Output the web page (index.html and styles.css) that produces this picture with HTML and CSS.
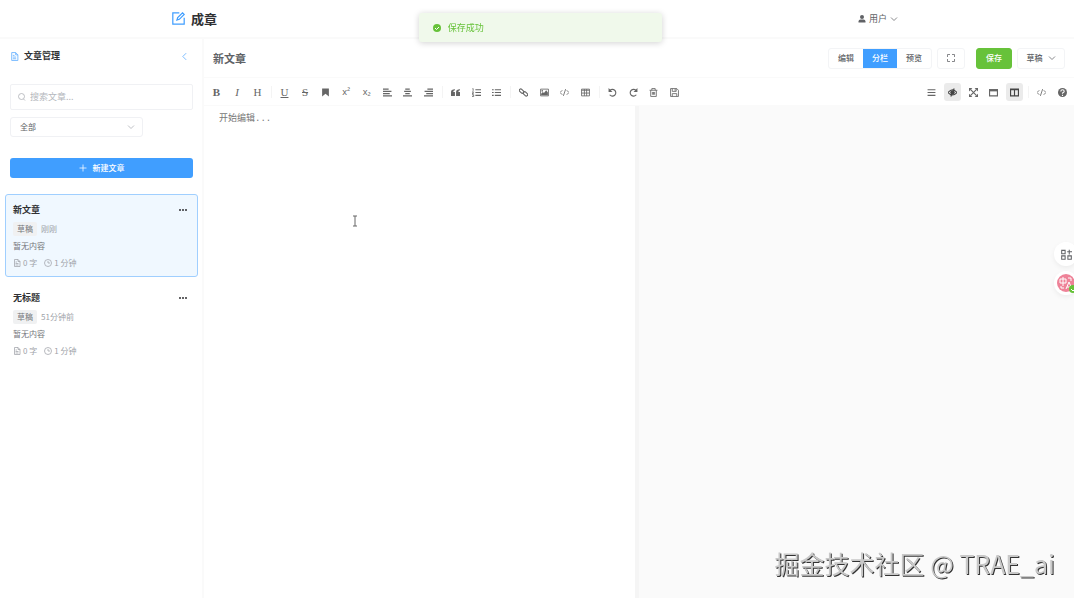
FILE: index.html
```html
<!DOCTYPE html>
<html lang="zh-CN">
<head>
  <meta charset="UTF-8" />
  <meta name="viewport" content="width=device-width, initial-scale=1.0"/>
  <title>成章</title>
  <link rel="stylesheet" href="styles.css">
</head>
<body>
  <!-- icon sprite -->
  <svg class="sprite" aria-hidden="true">
    <symbol id="i-edit" viewBox="0 0 16 16"><path d="M9 1H1v14h14V7M6 10l1-3 6-6 2 2-6 6z"/></symbol>
    <symbol id="i-doc" viewBox="0 0 16 16"><path d="M3 1h7l4 4v10H3zM10 1v4h4M5 6h3M5 9h6M5 12h6"/></symbol>
    <symbol id="i-left" viewBox="0 0 16 16"><path d="M11 2L5 8l6 6"/></symbol>
    <symbol id="i-down" viewBox="0 0 16 16"><path d="M2 5l6 6 6-6"/></symbol>
    <symbol id="i-search" viewBox="0 0 16 16"><circle cx="7" cy="7" r="6"/><path d="M11 12l3 3"/></symbol>
    <symbol id="i-plus" viewBox="0 0 16 16"><path d="M8 1v14M1 8h14"/></symbol>
    <symbol id="i-clock" viewBox="0 0 16 16"><circle cx="8" cy="8" r="7"/><path d="M8 4v4h4"/></symbol>
    <symbol id="i-more" viewBox="0 0 16 16"><g class="solid"><circle cx="2" cy="8" r="2"/><circle cx="8" cy="8" r="2"/><circle cx="14" cy="8" r="2"/></g></symbol>
    <symbol id="i-user" viewBox="0 0 16 16"><g class="solid"><circle cx="8" cy="4" r="4"/><path d="M1 15v-2q0-4 4-4h6q4 0 4 4v2z"/></g></symbol>
    <symbol id="i-check" viewBox="0 0 16 16"><circle class="solid" cx="8" cy="8" r="8"/><path class="tick" d="M4 8l3 3 5-5"/></symbol>
    <symbol id="i-full" viewBox="0 0 16 16"><path d="M1 6V1h5M10 1h5v5M15 10v5h-5M6 15H1v-5"/></symbol>
    <symbol id="i-bookmark" viewBox="0 0 16 16"><path class="solid" d="M2 1h12v14l-6-5-6 5z"/></symbol>
    <symbol id="i-al" viewBox="0 0 16 16"><path class="thick" d="M0 2h10M0 6h15M0 10h12M0 14h16"/></symbol>
    <symbol id="i-ac" viewBox="0 0 16 16"><path class="thick" d="M4 2h8M2 6h12M4 10h8M0 14h16"/></symbol>
    <symbol id="i-ar" viewBox="0 0 16 16"><path class="thick" d="M6 2h10M1 6h15M4 10h12M0 14h16"/></symbol>
    <symbol id="i-quote" viewBox="0 0 16 16"><path class="solid" d="M7 2v2Q4 4 4 7h3v7H0V7q0-5 7-5zM16 2v2q-3 0-3 3h3v7H9V7q0-5 7-5z"/></symbol>
    <symbol id="i-ol" viewBox="0 0 16 16"><path class="thick" d="M6 3h10M6 8h10M6 13h10"/><path d="M1 1h1v4M0 7h3L0 10h3M0 12h3v3H0"/></symbol>
    <symbol id="i-ul" viewBox="0 0 16 16"><path class="thick" d="M5 3h11M5 8h11M5 13h11M0 3h3M0 8h3M0 13h3"/></symbol>
    <symbol id="i-link" viewBox="0 0 16 16"><g class="thick"><rect x="0" y="3" width="9" height="5" rx="2.5" transform="rotate(45 4.5 5.5)"/><rect x="7" y="8" width="9" height="5" rx="2.5" transform="rotate(45 11.5 10.5)"/></g></symbol>
    <symbol id="i-image" viewBox="0 0 16 16"><path d="M1 2h14v12H1z"/><path class="solid" d="M2 13v-3l3-3 2 2 4-5 3 4v5z"/><circle class="solid" cx="4" cy="5" r="1.5"/></symbol>
    <symbol id="i-code" viewBox="0 0 16 16"><path d="M4 4L0 8l4 4M12 4l4 4-4 4M10 2L6 14"/></symbol>
    <symbol id="i-table" viewBox="0 0 16 16"><path d="M1 2h14v12H1zM1 4h14M1 9h14M6 2v12M10 2v12"/></symbol>
    <symbol id="i-undo" viewBox="0 0 16 16"><path class="thick" d="M3 5a6 6 0 1 1 0 7"/><path class="solid" d="M1 0v7h7z"/></symbol>
    <symbol id="i-redo" viewBox="0 0 16 16"><path class="thick" d="M13 5a6 6 0 1 0 0 7"/><path class="solid" d="M15 0v7H8z"/></symbol>
    <symbol id="i-trash" viewBox="0 0 16 16"><path d="M1 4h14M5 4V1h6v3M3 4v11h10V4M6 7v5M8 7v5M10 7v5"/></symbol>
    <symbol id="i-save" viewBox="0 0 16 16"><path d="M1 1h11l3 3v11H1zM4 1v5h7V1M4 15v-5h8v5M9 2v3"/></symbol>
    <symbol id="i-menu" viewBox="0 0 16 16"><path class="thick" d="M1 3h14M1 8h14M1 13h14"/></symbol>
    <symbol id="i-eye" viewBox="0 0 16 16"><path class="thick" d="M0 8q8-10 16 0-8 9-16 0z"/><circle class="solid" cx="8" cy="8" r="4"/><path class="thick" d="M11 1L5 15"/></symbol>
    <symbol id="i-expand" viewBox="0 0 16 16"><path class="thick" d="M3 3l10 10M13 3L3 13"/><path class="solid" d="M0 0h6L0 6zM16 0v6l-6-6zM0 16v-6l6 6zM16 16h-6l6-6z"/></symbol>
    <symbol id="i-window" viewBox="0 0 16 16"><path class="thick" d="M1 3h14v11H1z"/><path class="solid" d="M0 2h16v4H0z"/></symbol>
    <symbol id="i-split" viewBox="0 0 16 16"><path class="thick" d="M1 2h14v12H1zM8 3v11M1 3h14"/></symbol>
    <symbol id="i-help" viewBox="0 0 16 16"><circle class="solid" cx="8" cy="8" r="8"/><path class="tick" d="M5 6q0-3 3-3t3 3q0 1-3 3v1M8 12v2"/></symbol>
    <symbol id="i-apps" viewBox="0 0 16 16"><path d="M1 2h5v5H1zM1 10h5v5H1zM10 10h5v5h-5zM12 1v7M9 4h7"/></symbol>
  </svg>

  <header class="navbar">
    <div class="navbar-inner">
      <h1 class="brand"><svg class="icon icon-lg"><use href="#i-edit"/></svg>成章</h1>
      <button class="user-btn"><svg class="icon"><use href="#i-user"/></svg>用户<svg class="icon"><use href="#i-down"/></svg></button>
    </div>
  </header>

  <div class="layout">
    <aside class="sidebar">
      <div class="sidebar-header">
        <h2><svg class="icon"><use href="#i-doc"/></svg>文章管理</h2>
        <button class="collapse-btn" aria-label="收起"><svg class="icon"><use href="#i-left"/></svg></button>
      </div>

      <div class="filters">
        <label class="search"><svg class="icon"><use href="#i-search"/></svg><input type="text" placeholder="搜索文章..." aria-label="搜索文章"></label>
        <div class="status">
          <select aria-label="状态"><option>全部</option><option>草稿</option></select>
          <svg class="icon"><use href="#i-down"/></svg>
        </div>
        <button class="new-btn"><svg class="icon"><use href="#i-plus"/></svg>新建文章</button>
      </div>

      <section class="article-list">
        <article class="article active">
          <div class="article-top">
            <h3>新文章</h3>
            <button class="more-btn" aria-label="更多"><svg class="icon"><use href="#i-more"/></svg></button>
          </div>
          <div class="meta"><span class="tag">草稿</span><span>刚刚</span></div>
          <p>暂无内容</p>
          <div class="counts"><span><svg class="icon"><use href="#i-doc"/></svg>0 字</span><span><svg class="icon"><use href="#i-clock"/></svg>1 分钟</span></div>
        </article>
        <article class="article">
          <div class="article-top">
            <h3>无标题</h3>
            <button class="more-btn" aria-label="更多"><svg class="icon"><use href="#i-more"/></svg></button>
          </div>
          <div class="meta"><span class="tag">草稿</span><span>51分钟前</span></div>
          <p>暂无内容</p>
          <div class="counts"><span><svg class="icon"><use href="#i-doc"/></svg>0 字</span><span><svg class="icon"><use href="#i-clock"/></svg>1 分钟</span></div>
        </article>
      </section>
    </aside>

    <main class="editor">
      <div class="title-bar">
        <h2>新文章</h2>
        <div class="actions">
          <div class="mode-group">
            <button>编辑</button>
            <button class="selected">分栏</button>
            <button>预览</button>
          </div>
          <button class="btn full-btn" aria-label="全屏"><svg class="icon"><use href="#i-full"/></svg></button>
          <button class="btn save-btn">保存</button>
          <button class="btn draft-btn">草稿<svg class="icon"><use href="#i-down"/></svg></button>
        </div>
      </div>

      <div class="toolbar">
        <div class="tools tools-3">
          <button><b>B</b></button>
          <button><i>I</i></button>
          <button>H</button>
        </div>
        <span class="divider"></span>
        <div class="tools tools-8">
          <button><u>U</u></button>
          <button><s>S</s></button>
          <button aria-label="标记"><svg class="icon"><use href="#i-bookmark"/></svg></button>
          <button class="script">x²</button>
          <button class="script">x₂</button>
          <button aria-label="左对齐"><svg class="icon"><use href="#i-al"/></svg></button>
          <button aria-label="居中"><svg class="icon"><use href="#i-ac"/></svg></button>
          <button aria-label="右对齐"><svg class="icon"><use href="#i-ar"/></svg></button>
        </div>
        <span class="divider"></span>
        <div class="tools tools-3">
          <button aria-label="引用"><svg class="icon"><use href="#i-quote"/></svg></button>
          <button aria-label="有序列表"><svg class="icon"><use href="#i-ol"/></svg></button>
          <button aria-label="无序列表"><svg class="icon"><use href="#i-ul"/></svg></button>
        </div>
        <span class="divider"></span>
        <div class="tools tools-4">
          <button aria-label="链接"><svg class="icon"><use href="#i-link"/></svg></button>
          <button aria-label="图片"><svg class="icon"><use href="#i-image"/></svg></button>
          <button aria-label="代码"><svg class="icon"><use href="#i-code"/></svg></button>
          <button aria-label="表格"><svg class="icon"><use href="#i-table"/></svg></button>
        </div>
        <span class="divider"></span>
        <div class="tools tools-4">
          <button aria-label="撤销"><svg class="icon"><use href="#i-undo"/></svg></button>
          <button aria-label="重做"><svg class="icon"><use href="#i-redo"/></svg></button>
          <button aria-label="清空"><svg class="icon"><use href="#i-trash"/></svg></button>
          <button aria-label="存储"><svg class="icon"><use href="#i-save"/></svg></button>
        </div>
        <div class="tools tools-5 push">
          <button aria-label="目录"><svg class="icon"><use href="#i-menu"/></svg></button>
          <button class="on" aria-label="预览"><svg class="icon"><use href="#i-eye"/></svg></button>
          <button aria-label="全屏编辑"><svg class="icon"><use href="#i-expand"/></svg></button>
          <button aria-label="阅读"><svg class="icon"><use href="#i-window"/></svg></button>
          <button class="on" aria-label="双栏"><svg class="icon"><use href="#i-split"/></svg></button>
        </div>
        <span class="divider"></span>
        <div class="tools tools-2">
          <button aria-label="源码"><svg class="icon"><use href="#i-code"/></svg></button>
          <button aria-label="帮助"><svg class="icon"><use href="#i-help"/></svg></button>
        </div>
      </div>

      <div class="panes">
        <textarea placeholder="开始编辑..." aria-label="内容"></textarea>
        <div class="preview"></div>
      </div>
    </main>
  </div>

  <div class="toast" role="status"><svg class="icon"><use href="#i-check"/></svg>保存成功</div>

  <svg class="cursor" viewBox="0 0 6 12" aria-hidden="true"><path d="M1 1h4M3 1v10M1 11h4"/></svg>

  <button class="float-btn float-apps" aria-label="应用"><svg class="icon"><use href="#i-apps"/></svg></button>
  <button class="float-btn float-translate" aria-label="翻译">
    <svg viewBox="0 0 20 20"><circle cx="10" cy="10" r="9" fill="#ee8298"/><path d="M4 6h6v4H4zM7 4v9M12 5h3v3M5 13v2h3M10 16l3-7 3 7M11 14h4" fill="none" stroke="#fff"/><circle cx="17" cy="16" r="4" fill="#67c23a"/><path d="M15 16l2 2 3-3" fill="none" stroke="#fff"/></svg>
  </button>

  <div class="watermark">掘金技术社区 @ TRAE_ai</div>
</body>
</html>
```
FILE: styles.css
```css
* {
  box-sizing: border-box;
}

body {
  margin: 0;
  height: 100vh;
  display: flex;
  flex-direction: column;
  overflow: hidden;
  background-color: #fff;
  color: #606266;
  font-family: "Noto Sans CJK SC", sans-serif;
  font-size: 8px;
  line-height: 12px;
}

h1, h2, h3, p {
  margin: 0;
}

button, input, select, textarea {
  font: inherit;
  color: inherit;
  margin: 0;
  padding: 0;
  border: 0;
  background: none;
  outline: none;
}

button {
  display: flex;
  align-items: center;
  justify-content: center;
  cursor: pointer;
}

.sprite {
  position: absolute;
  width: 0;
  height: 0;
}

.icon {
  width: 8px;
  height: 8px;
  flex: none;
  fill: none;
  stroke: currentColor;
  stroke-width: 1.5;
}

.icon-lg {
  width: 13px;
  height: 13px;
}

.solid {
  fill: currentColor;
  stroke: none;
}

.thick {
  stroke-width: 2;
}

.tick {
  stroke: #fff;
  stroke-width: 2;
}

/* header */
.navbar {
  height: 39px;
  flex: none;
  border-bottom: 2px solid #fafafa;
  display: flex;
}

.navbar-inner {
  width: 100%;
  max-width: 730px;
  margin: 0 auto;
  display: flex;
  justify-content: space-between;
  align-items: center;
}

.brand {
  display: flex;
  align-items: center;
  gap: 6px;
  color: #303133;
  font-size: 13px;
  line-height: 20px;
}

.brand .icon {
  color: #409eff;
}

.user-btn {
  gap: 3px;
  padding-right: 4px;
  font-size: 9px;
}

.layout {
  flex: 1;
  min-height: 0;
  display: flex;
}

/* sidebar */
.sidebar {
  width: 204px;
  flex: none;
  border-right: 2px solid #fafafa;
}

.sidebar-header {
  height: 34px;
  padding: 0 13px 0 10px;
  display: flex;
  justify-content: space-between;
  align-items: center;
}

.sidebar-header h2 {
  display: flex;
  align-items: center;
  gap: 5px;
  color: #303133;
  font-size: 9px;
}

.sidebar-header .icon {
  width: 9px;
  height: 9px;
  color: #66b1ff;
}

.filters {
  padding: 11px 9px 16px 10px;
}

.search {
  height: 26px;
  padding: 0 7px;
  border: 1px solid #f0f1f4;
  border-radius: 2px;
  display: flex;
  align-items: center;
  gap: 4px;
  color: #a8abb2;
  font-size: 9px;
}

.search input {
  flex: 1;
  min-width: 0;
}

.search input::placeholder {
  color: #b4b7bd;
}

.status {
  width: 133px;
  height: 20px;
  margin: 7px 0 21px;
  padding-right: 7px;
  border: 1px solid #f0f1f4;
  border-radius: 3px;
  display: flex;
  align-items: center;
  color: #a8abb2;
}

.status select {
  flex: 1;
  appearance: none;
  padding-left: 9px;
  color: #606266;
}

.new-btn {
  width: 100%;
  height: 20px;
  gap: 6px;
  border-radius: 3px;
  background-color: #409eff;
  color: #fff;
  font-weight: 500;
}

.article-list {
  padding: 0 4px 0 5px;
  display: flex;
  flex-direction: column;
  gap: 5px;
}

.article {
  padding: 8px 10px 7px 7px;
  border: 1px solid transparent;
  border-radius: 3px;
}

.article.active {
  border-color: #a0cfff;
  background-color: #f0f8ff;
}

.article-top {
  display: flex;
  justify-content: space-between;
  align-items: center;
}

.article h3 {
  color: #303133;
  font-size: 9px;
  line-height: 14px;
}

.more-btn {
  color: #303133;
}

.meta {
  margin: 5px 0 4px;
  display: flex;
  align-items: center;
  gap: 4px;
  color: #a0a3a9;
}

.tag {
  padding: 1px 4px;
  border-radius: 2px;
  background-color: #f0f1f2;
  color: #73767a;
}

.article p {
  color: #73767a;
}

.counts {
  margin-top: 5px;
  display: flex;
  gap: 7px;
  color: #a0a3a9;
}

.counts span {
  display: flex;
  align-items: center;
  gap: 2px;
}

/* editor */
.editor {
  flex: 1;
  min-width: 0;
  display: flex;
  flex-direction: column;
}

.title-bar {
  height: 39px;
  flex: none;
  padding: 0 9px;
  border-bottom: 1px solid #fafafa;
  display: flex;
  justify-content: space-between;
  align-items: center;
}

.title-bar h2 {
  color: #606266;
  font-size: 11px;
  line-height: 16px;
}

.actions {
  display: flex;
  align-items: center;
  gap: 5px;
}

.mode-group {
  height: 21px;
  border: 1px solid #f3f4f6;
  border-radius: 3px;
  display: flex;
}

.mode-group button {
  width: 34px;
  font-weight: 500;
}

.mode-group .selected {
  background-color: #409eff;
  color: #fff;
}

.btn {
  height: 21px;
  border: 1px solid #f3f4f6;
  border-radius: 3px;
  font-weight: 500;
}

.full-btn {
  width: 28px;
}

.save-btn {
  width: 36px;
  margin-left: 6px;
  border-color: #67c23a;
  background-color: #67c23a;
  color: #fff;
}

.draft-btn {
  width: 48px;
  gap: 5px;
}

.toolbar {
  height: 28px;
  flex: none;
  padding: 1px 3px 0 4px;
  border-bottom: 1px solid #fafafa;
  display: flex;
  align-items: center;
  color: #666;
}

.tools {
  display: flex;
  justify-content: space-between;
}

.tools-2 { width: 38px; }
.tools-3 { width: 58px; }
.tools-4 { width: 79px; }
.tools-5 { width: 100px; }
.tools-8 { width: 161px; }

.push {
  margin-left: auto;
}

.tools button {
  width: 17px;
  height: 18px;
  border-radius: 3px;
  font-family: "Liberation Serif", serif;
  font-size: 11px;
}

.tools .script {
  font-family: "Noto Sans", sans-serif;
  font-size: 9px;
}

.tools .icon {
  width: 9px;
  height: 9px;
}

.tools .on {
  background-color: #ebebeb;
  color: #444;
}

.divider {
  width: 1px;
  height: 12px;
  margin: 0 4px 0 5px;
  background-color: #f4f4f4;
}

.panes {
  flex: 1;
  min-height: 0;
  display: flex;
}

.panes textarea {
  width: 50%;
  resize: none;
  padding: 7px 15px;
  border-right: 4px solid #f5f5f5;
  font-family: "Liberation Mono", "Noto Sans CJK SC", monospace;
  font-size: 9px;
}

.panes textarea::placeholder {
  color: #777;
}

.preview {
  width: 50%;
  background-color: #fafafa;
}

/* overlays */
.toast {
  position: fixed;
  top: 13px;
  left: 39%;
  width: 243px;
  height: 29px;
  padding: 0 14px;
  border-radius: 3px;
  background-color: #f0f9eb;
  box-shadow: 0 1px 6px rgba(0, 0, 0, 0.18);
  display: flex;
  align-items: center;
  gap: 7px;
  color: #67c23a;
  font-size: 9px;
}

.cursor {
  position: fixed;
  top: 215px;
  left: 352px;
  width: 6px;
  height: 12px;
  fill: none;
  stroke: #666;
}

.float-btn {
  position: fixed;
  right: -4px;
  width: 24px;
  height: 24px;
  border-radius: 50%;
  background-color: #fff;
  box-shadow: 0 2px 5px rgba(0, 0, 0, 0.06);
}

.float-apps {
  top: 242px;
}

.float-apps .icon {
  width: 11px;
  height: 11px;
}

.float-translate {
  top: 271px;
}

.float-translate svg {
  width: 20px;
  height: 20px;
}

.watermark {
  position: fixed;
  right: 19px;
  bottom: 17px;
  color: #c8c8c8;
  font-size: 25px;
  line-height: 36px;
  text-shadow: 1px 1px 0 #333;
  pointer-events: none;
}
```
